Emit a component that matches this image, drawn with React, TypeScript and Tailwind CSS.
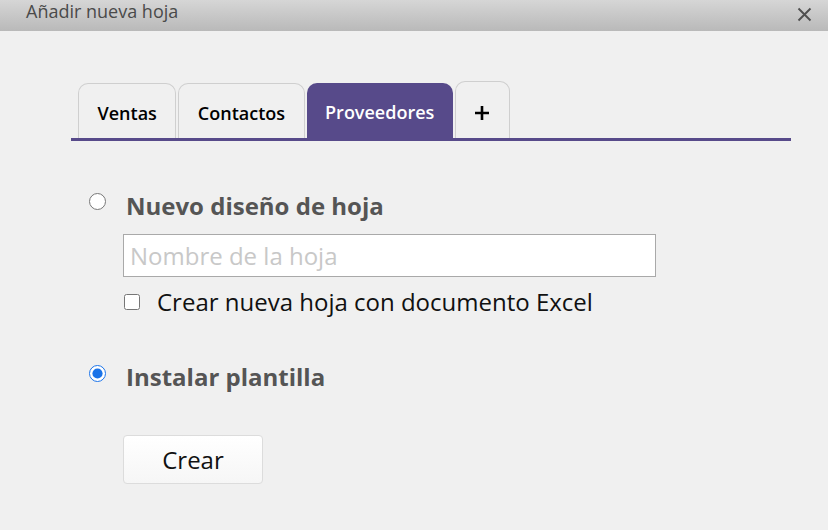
import React, { useState } from 'react';

const tabs = ['Ventas', 'Contactos', 'Proveedores'];

export default function App() {
  const [active, setActive] = useState('Proveedores');
  const [mode, setMode] = useState<'nuevo' | 'plantilla'>('plantilla');

  return (
    <div
      className="w-[828px] h-[530px] bg-[#f0f0f0] overflow-hidden flex flex-col"
      style={{ fontFamily: '"Open Sans", "Noto Sans", sans-serif' }}
    >
      {/* title bar */}
      <div className="h-[31px] shrink-0 flex items-start justify-between pl-[26px] pr-[16px] bg-gradient-to-b from-[#d6d6d6] to-[#b9b9b9]">
        <span className="text-[18px] leading-[22px] text-[#4a4a4a]">Añadir nueva hoja</span>
        <svg width="15" height="15" viewBox="0 0 15 15" className="mt-[7px]">
          <path d="M1.5 1.5 L13.5 13.5 M13.5 1.5 L1.5 13.5" stroke="#4f4f4f" strokeWidth="1.9" />
        </svg>
      </div>

      <div className="pl-[71px] pr-[37px] pt-[50px]">
        {/* tabs */}
        <div className="flex items-end gap-[2px] pl-[7px] border-b-[3px] border-[#574a8a]">
          {tabs.map((t) => {
            const on = t === active;
            return (
              <button
                key={t}
                onClick={() => setActive(t)}
                className={
                  on
                    ? 'h-[55px] px-[18.5px] rounded-t-[10px] bg-[#574a8a] text-white text-[18px] font-semibold pt-[4px]'
                    : 'h-[55px] px-[18.5px] rounded-t-[10px] bg-[#f0f0f0] border border-b-0 border-[#cfcfcf] text-black text-[18px] font-semibold pt-[4px]'
                }
              >
                {t}
              </button>
            );
          })}
          <button className="h-[57px] w-[55px] rounded-t-[10px] border border-b-0 border-[#cfcfcf] flex items-center justify-center pt-[6px]">
            <svg width="16" height="16" viewBox="0 0 16 16">
              <path d="M8 1 V15 M1 8 H15" stroke="#000" strokeWidth="2.6" />
            </svg>
          </button>
        </div>

        {/* options */}
        <div className="pl-[18px] pt-[49px]">
          <label className="flex items-center gap-[20px] cursor-pointer">
            <input
              type="radio"
              name="mode"
              checked={mode === 'nuevo'}
              onChange={() => setMode('nuevo')}
              className="w-[17px] h-[17px] m-0 -mt-[10px] accent-[#1a73e8]"
            />
            <span className="text-[24px] leading-[32px] font-bold text-[#555]">Nuevo diseño de hoja</span>
          </label>

          <div className="pl-[34px] pt-[12px]">
            <input
              type="text"
              placeholder="Nombre de la hoja"
              className="w-[533px] h-[43px] bg-white border border-[#a9a9a9] px-[6px] text-[24px] text-[#333] placeholder:text-[#c8c8c8] outline-none"
            />
            <label className="flex items-center gap-[17px] pt-[9px] pl-[1px] cursor-pointer">
              <input type="checkbox" className="w-[16px] h-[16px] m-0" />
              <span className="text-[24px] leading-[32px] text-[#111]">Crear nueva hoja con documento Excel</span>
            </label>
          </div>

          <label className="flex items-center gap-[20px] pt-[43px] cursor-pointer">
            <input
              type="radio"
              name="mode"
              checked={mode === 'plantilla'}
              onChange={() => setMode('plantilla')}
              className="w-[17px] h-[17px] m-0 -mt-[8px] accent-[#1a73e8]"
            />
            <span className="text-[24px] leading-[32px] font-bold text-[#555]">Instalar plantilla</span>
          </label>

          <div className="pl-[34px] pt-[42px]">
            <button className="w-[140px] h-[49px] rounded-[4px] border border-[#dcdcdc] bg-gradient-to-b from-white to-[#f6f6f6] text-[24px] text-[#111]">
              Crear
            </button>
          </div>
        </div>
      </div>
    </div>
  );
}
